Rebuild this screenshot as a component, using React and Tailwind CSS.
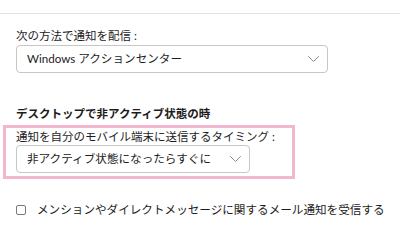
import React from 'react';

const Chevron = () => (
  <svg width="11" height="6" viewBox="0 0 11 6" fill="none" className="shrink-0">
    <path d="M0.5 0.5L5.5 5.5L10.5 0.5" stroke="#8a8a8a" strokeWidth="1" strokeLinecap="round" strokeLinejoin="round" />
  </svg>
);

const Select = ({ value, width }) => (
  <div
    className={`flex items-center justify-between h-[28px] border border-[#c6c6c6] rounded-[4px] bg-white pl-[10px] pr-[8px] ${width}`}
  >
    <span className="text-[11.6px] leading-[16px] text-[#1d1c1d]">{value}</span>
    <Chevron />
  </div>
);

export default function App() {
  return (
    <div
      className="w-[400px] h-[232px] bg-white overflow-hidden text-[#1d1c1d]"
      style={{ fontFamily: "Lato, 'Noto Sans CJK JP', sans-serif" }}
    >
      <div className="h-[13px]" />
      <div className="border-t border-[#e3e3e3]" />

      <div className="px-4">
        {/* delivery method */}
        <p className="mt-[14px] text-[11.5px] leading-[16px]">次の方法で通知を配信 :</p>
        <div className="mt-[1px]">
          <Select value="Windows アクションセンター" width="w-[312px]" />
        </div>

        {/* inactive on desktop */}
        <h3 className="mt-[33px] text-[11.5px] leading-[16px] font-bold">
          デスクトップで非アクティブ状態の時
        </h3>
        <div className="mt-[3px] ml-[-13px] w-[292px] border-[3px] border-[#f3b6cf] pl-[10px] pt-[1px] pb-[3px]">
          <p className="text-[11.5px] leading-[16px]">通知を自分のモバイル端末に送信するタイミング :</p>
          <Select value="非アクティブ状態になったらすぐに" width="w-[234px]" />
        </div>

        {/* email option */}
        <label className="mt-[23px] flex items-center gap-[11px]">
          <span className="w-[10px] h-[10px] border border-[#7a7a7a] rounded-[2px] bg-white shrink-0" />
          <span className="text-[11.6px] leading-[16px] whitespace-nowrap">
            メンションやダイレクトメッセージに関するメール通知を受信する
          </span>
        </label>
      </div>
    </div>
  );
}
